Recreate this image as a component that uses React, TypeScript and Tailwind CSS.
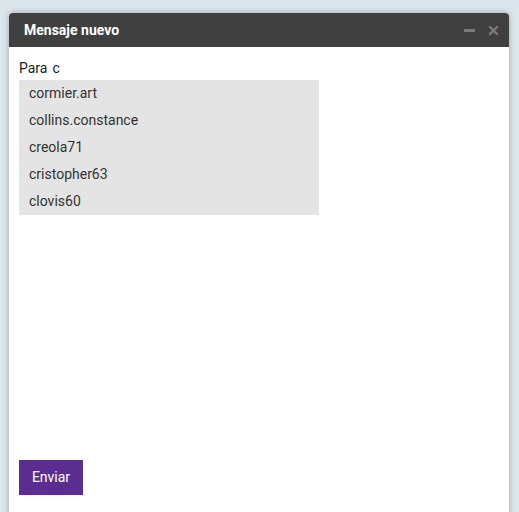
import { useState } from 'react'

const suggestions = ['cormier.art', 'collins.constance', 'creola71', 'cristopher63', 'clovis60']

const App = () => {
  const [to, setTo] = useState('c')

  return (
    <div className="min-h-[512px] bg-[#dce7ed] pt-[13px] pl-[9px] overflow-hidden" style={{ fontFamily: 'Roboto, "Liberation Sans", sans-serif' }}>
      <div className="w-[500px] h-[520px] bg-white rounded-t-[4px] shadow-[0_0_6px_rgba(0,0,0,0.3)] flex flex-col">
        {/* Header */}
        <div className="h-[34px] bg-[#404040] rounded-t-[4px] flex items-center pl-[15px] pr-[11px]">
          <span className="text-white text-[14px] font-bold flex-1">Mensaje nuevo</span>
          <div className="flex items-center gap-[14px]">
            <span className="block w-[11px] h-[3px] bg-[#7a7a7a] mt-[1px]"></span>
            <svg width="9" height="9" viewBox="0 0 9 9" className="mt-[1px]">
              <path d="M1 1 L8 8 M8 1 L1 8" stroke="#7a7a7a" strokeWidth="2.4" strokeLinecap="square" />
            </svg>
          </div>
        </div>

        {/* Body */}
        <div className="px-[10px] pt-[10px] flex flex-col">
          <div className="flex items-center h-[23px] text-[14px] text-[#222]">
            <span>Para</span>
            <input
              value={to}
              onChange={(e) => setTo(e.target.value)}
              className="ml-[5px] outline-none border-none bg-transparent text-[14px] text-[#222] w-[200px]"
            />
          </div>
          <ul className="w-[300px] bg-[#e4e4e4]">
            {suggestions.map((s) => (
              <li key={s} className="h-[27px] flex items-center pl-[10px] text-[14px] text-[#333]">
                {s}
              </li>
            ))}
          </ul>
          <div>
            <button className="mt-[245px] h-[35px] w-[64px] bg-[#5b2d91] text-white text-[14px]">Enviar</button>
          </div>
        </div>
      </div>
    </div>
  )
}

export default App
